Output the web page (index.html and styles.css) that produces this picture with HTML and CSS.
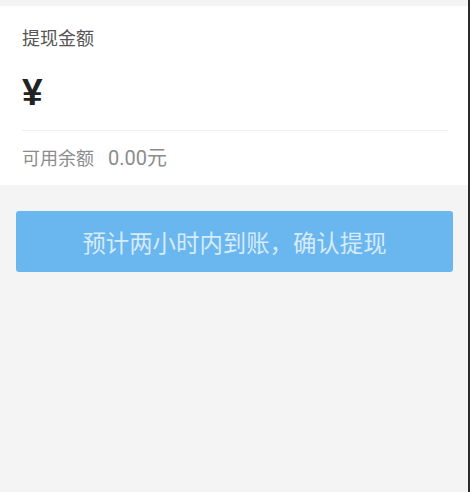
FILE: index.html
```html
<!DOCTYPE html>
<html>
<head>
    <meta charset="utf-8">
    <title>提现</title>
    <link rel="stylesheet" href="styles.css">
</head>
<body>
    <div class="page">
        <div class="panel">
            <div class="label">提现金额</div>
            <div class="amount">
                <span class="yen">¥</span>
                <input type="text" class="amount-input">
            </div>
            <div class="balance">可用余额<span class="num">0.00元</span></div>
        </div>

        <button type="button" class="submit" disabled>预计两小时内到账，确认提现</button>
    </div>
</body>
</html>
```

FILE: styles.css
```css
html, body {
    margin: 0;
    height: 100%;
}
body {
    background-color: #f4f4f4;
    font-family: "Noto Sans CJK SC", "Noto Sans", sans-serif;
}
.page {
    height: 100%;
    border-right: 2px solid #2b2b2b;
    box-sizing: border-box;
    padding-top: 6px;
}
.panel {
    background-color: #fff;
    padding-left: 22px;
}
.label {
    padding-top: 19px;
    font-size: 18px;
    line-height: 24px;
    color: #555;
}
.amount {
    display: flex;
    align-items: center;
    height: 82px;
    margin-right: 20px;
    border-bottom: 1px solid #eee;
    padding-top: 6px;
    box-sizing: border-box;
}
.yen {
    font-family: "Liberation Sans", sans-serif;
    font-weight: bold;
    font-size: 37px;
    color: #222;
}
.amount-input {
    flex: 1;
    border: none;
    outline: none;
    font-size: 30px;
    margin-left: 8px;
    background: transparent;
}
.balance {
    font-size: 18px;
    line-height: 53px;
    color: #8c8c8c;
}
.balance .num {
    font-family: Roboto, "Noto Sans CJK SC", sans-serif;
    font-size: 20px;
    margin-left: 14px;
}
.submit {
    display: block;
    width: 437px;
    height: 61px;
    margin: 26px 0 0 16px;
    border: none;
    border-radius: 3px;
    background-color: #6ab6ee;
    color: #d6ebfb;
    font-family: "Noto Sans CJK SC", sans-serif;
    font-size: 23.4px;
    padding: 0;
}
```
